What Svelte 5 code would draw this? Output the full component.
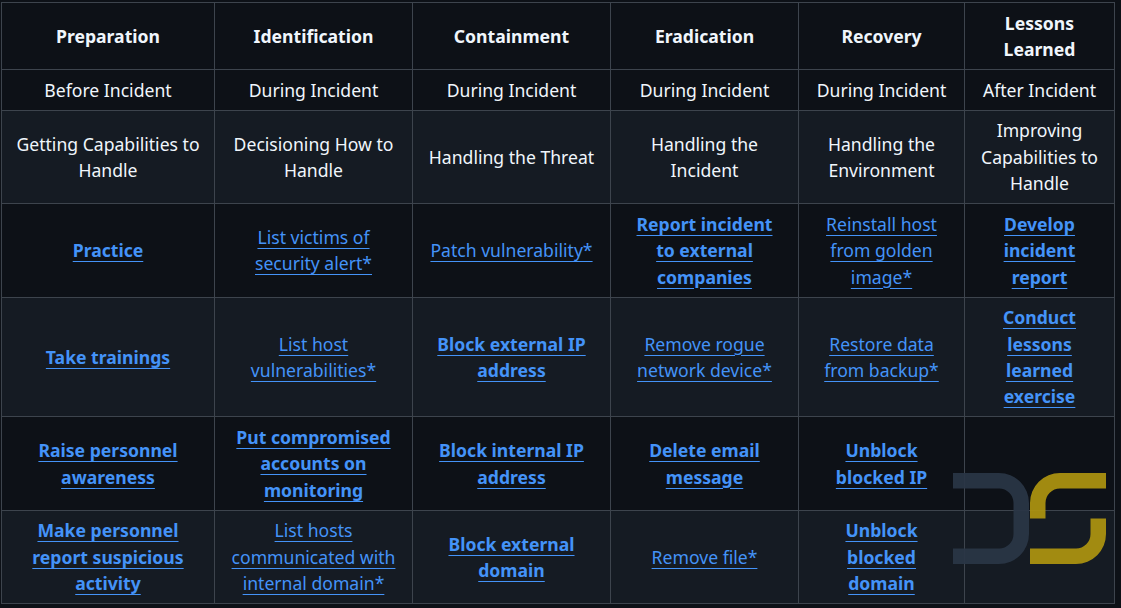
<script lang="ts">
  // Incident response phases table, with the site logo floating over the corner.
  type Cell = { text: string; bold?: boolean }

  const b = (text: string): Cell => ({ text, bold: true })
  const l = (text: string): Cell => ({ text })

  const headers = ['Preparation', 'Identification', 'Containment', 'Eradication', 'Recovery', 'Lessons Learned']
  const widths = [213, 198, 198, 188, 166, 150]

  const plain = [
    ['Before Incident', 'During Incident', 'During Incident', 'During Incident', 'During Incident', 'After Incident'],
    [
      'Getting Capabilities to Handle',
      'Decisioning How to Handle',
      'Handling the Threat',
      'Handling the Incident',
      'Handling the Environment',
      'Improving Capabilities to Handle',
    ],
  ]

  const linkRows: (Cell | null)[][] = [
    [
      b('Practice'),
      l('List victims of security alert*'),
      l('Patch vulnerability*'),
      b('Report incident to external companies'),
      l('Reinstall host from golden image*'),
      b('Develop incident report'),
    ],
    [
      b('Take trainings'),
      l('List host vulnerabilities*'),
      b('Block external IP address'),
      l('Remove rogue network device*'),
      l('Restore data from backup*'),
      b('Conduct lessons learned exercise'),
    ],
    [
      b('Raise personnel awareness'),
      b('Put compromised accounts on monitoring'),
      b('Block internal IP address'),
      b('Delete email message'),
      b('Unblock blocked IP'),
      null,
    ],
    [
      b('Make personnel report suspicious activity'),
      l('List hosts communicated with internal domain*'),
      b('Block external domain'),
      l('Remove file*'),
      b('Unblock blocked domain'),
      null,
    ],
  ]
</script>

<div class="page">
  <table>
    <colgroup>
      {#each widths as w}
        <col style="width: {w}px" />
      {/each}
    </colgroup>
    <thead>
      <tr>
        {#each headers as h}
          <th>{h}</th>
        {/each}
      </tr>
    </thead>
    <tbody>
      {#each plain as row}
        <tr>
          {#each row as c}
            <td>{c}</td>
          {/each}
        </tr>
      {/each}
      {#each linkRows as row}
        <tr>
          {#each row as c}
            <td>
              {#if c}
                <a href="#top" class:bold={c.bold}>{c.text}</a>
              {/if}
            </td>
          {/each}
        </tr>
      {/each}
    </tbody>
  </table>

  <svg class="logo" width="153" height="91" viewBox="0 0 153 91" aria-hidden="true">
    <path class="d" d="M0 0H46A30 30 0 0 1 76 30V61A30 30 0 0 1 46 91H0V75.500H46A14.500 14.500 0 0 0 60.500 61V30A14.500 14.500 0 0 0 46 15.500H0Z" />
    <path class="s" d="M153 0V15.500H107A14.500 14.500 0 0 0 92.500 30V45.500H77V30A30 30 0 0 1 107 0Z" />
    <path class="s" d="M153 45.500V61A30 30 0 0 1 123 91H77V75.500H123A14.500 14.500 0 0 0 137.500 61V45.500Z" />
  </svg>
</div>

<style>
  :global(body) {
    background: #0d1117;
  }
  .page {
    position: relative;
    width: 1121px;
    height: 608px;
    overflow: hidden;
    box-sizing: border-box;
    padding: 2.2px 0 0 1px;
    background: #0d1117;
    font-family: 'Noto Sans', sans-serif;
    font-size: 17.6px;
    line-height: 26.4px;
    color: #f0f6fc;
  }
  table {
    border-collapse: collapse;
    table-layout: fixed;
    width: 1113px;
  }
  th,
  td {
    border: 1px solid #3d444d;
    padding: 6.6px 14.4px;
    text-align: center;
    vertical-align: middle;
  }
  th {
    font-weight: 700;
  }
  tbody tr:nth-child(even) {
    background: #151b23;
  }
  a {
    color: #4493f8;
    text-decoration: underline;
    text-underline-offset: 3.5px;
  }
  a.bold {
    font-weight: 700;
  }
  .logo {
    position: absolute;
    left: 953px;
    top: 473px;
    opacity: 0.93;
  }
  .d {
    fill: #2a3646;
  }
  .s {
    fill: #ad9410;
  }
</style>
